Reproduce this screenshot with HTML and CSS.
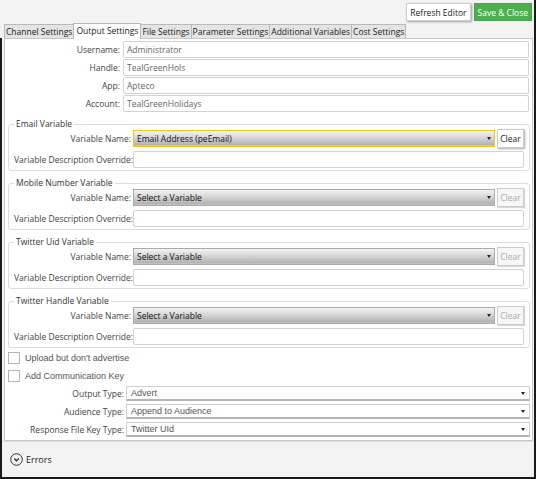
FILE: index.html
```html
<!DOCTYPE html>
<html lang="en">
<head>
  <meta charset="UTF-8" />
  <title>Output Settings</title>
  <link rel="stylesheet" href="styles.css">
</head>
<body>
  <div class="window">
    <div class="toolbar">
      <button class="btn btn-refresh">Refresh Editor</button>
      <button class="btn btn-save">Save &amp; Close</button>
    </div>

    <div class="tabs">
      <div class="tab">Channel Settings</div>
      <div class="tab active">Output Settings</div>
      <div class="tab">File Settings</div>
      <div class="tab">Parameter Settings</div>
      <div class="tab">Additional Variables</div>
      <div class="tab">Cost Settings</div>
    </div>

    <div class="main">
      <div class="panel">
        <div class="account-rows">
          <label>Username:</label><input class="text" value="Administrator" />
          <label>Handle:</label><input class="text" value="TealGreenHols" />
          <label>App:</label><input class="text" value="Apteco" />
          <label>Account:</label><input class="text" value="TealGreenHolidays" />
        </div>

        <fieldset class="group">
          <legend>Email Variable</legend>
          <div class="var-rows">
            <label>Variable Name:</label>
            <div class="combo focused"><span>Email Address (peEmail)</span><i class="arrow"></i></div>
            <button class="clear">Clear</button>
            <label>Variable Description Override:</label>
            <input class="text wide" />
          </div>
        </fieldset>

        <fieldset class="group">
          <legend>Mobile Number Variable</legend>
          <div class="var-rows">
            <label>Variable Name:</label>
            <div class="combo"><span>Select a Variable</span><i class="arrow"></i></div>
            <button class="clear" disabled>Clear</button>
            <label>Variable Description Override:</label>
            <input class="text wide" />
          </div>
        </fieldset>

        <fieldset class="group">
          <legend>Twitter Uid Variable</legend>
          <div class="var-rows">
            <label>Variable Name:</label>
            <div class="combo"><span>Select a Variable</span><i class="arrow"></i></div>
            <button class="clear" disabled>Clear</button>
            <label>Variable Description Override:</label>
            <input class="text wide" />
          </div>
        </fieldset>

        <fieldset class="group">
          <legend>Twitter Handle Variable</legend>
          <div class="var-rows">
            <label>Variable Name:</label>
            <div class="combo"><span>Select a Variable</span><i class="arrow"></i></div>
            <button class="clear" disabled>Clear</button>
            <label>Variable Description Override:</label>
            <input class="text wide" />
          </div>
        </fieldset>

        <div class="checks">
          <label class="check"><span class="box"></span>Upload but don't advertise</label>
          <label class="check"><span class="box"></span>Add Communication Key</label>
        </div>

        <div class="output-rows">
          <label>Output Type:</label>
          <div class="dropdown"><span>Advert</span><i class="arrow"></i></div>
          <label>Audience Type:</label>
          <div class="dropdown"><span>Append to Audience</span><i class="arrow"></i></div>
          <label>Response File Key Type:</label>
          <div class="dropdown"><span>Twitter UId</span><i class="arrow"></i></div>
        </div>
      </div>

      <div class="errors">
        <svg class="errors-icon" width="13" height="13" viewBox="0 0 13 13">
          <circle cx="6.5" cy="6.5" r="5.8" fill="none" stroke="#333" stroke-width="1" />
          <path d="M4.2 5.5 L6.5 7.8 L8.8 5.5" fill="none" stroke="#333" stroke-width="1.3" />
        </svg>
        <span>Errors</span>
      </div>
    </div>
  </div>
</body>
</html>
```

FILE: styles.css
```css
body {
  margin: 0;
  font-family: "Open Sans", "Noto Sans", sans-serif;
  font-size: 8.5px;
  color: #333;
  background-color: #f3f3f3;
}

.window {
  width: 536px;
  height: 479px;
  box-sizing: border-box;
  border-right: 2px solid #1a1a1a;
  border-bottom: 2px solid #1a1a1a;
  display: flex;
  flex-direction: column;
  background-color: #f3f3f3;
}

.toolbar {
  height: 24px;
  box-sizing: border-box;
  display: flex;
  justify-content: flex-end;
  gap: 3px;
  padding: 3px 2px 0 0;
}

.btn {
  font-family: inherit;
  font-size: 8.5px;
  height: 18px;
  padding: 0 3px;
  border-radius: 0;
  cursor: pointer;
}

.btn-refresh {
  background-color: white;
  color: #222;
  border: 1px solid #ccc;
  box-shadow: 1px 1px 2px rgba(0, 0, 0, 0.35);
}

.btn-save {
  background-color: #4cae4f;
  color: white;
  border: 1px solid #46a449;
}

.tabs {
  display: flex;
  height: 14px;
  padding-left: 4px;
  align-items: flex-end;
}

.tab {
  height: 14px;
  box-sizing: border-box;
  padding: 0 1px;
  line-height: 13px;
  background-color: #e4e4e4;
  border: 1px solid #b9b9b9;
  border-bottom: none;
  margin-right: -1px;
  color: #222;
  white-space: nowrap;
}

.tab.active {
  background-color: white;
  height: 16px;
  margin-bottom: -1px;
  position: relative;
  z-index: 1;
  padding: 0 2px;
}

.main {
  flex: 1;
  display: flex;
  flex-direction: column;
  border-left: 2px solid #1a1a1a;
}

.panel {
  background-color: white;
  border: 1px solid #c8c8c8;
  margin-left: 2px;
  margin-right: 1px;
  height: 403px;
  box-sizing: border-box;
  padding: 2px 2px 0 3px;
}

label {
  color: #444;
  white-space: nowrap;
}

.text {
  font-family: inherit;
  font-size: 8.5px;
  color: #666;
  height: 17px;
  box-sizing: border-box;
  border: 1px solid #d2d2d2;
  border-radius: 2px;
  padding: 0 3px;
  outline: none;
  width: 100%;
}

.account-rows {
  display: grid;
  grid-template-columns: 112px 1fr;
  column-gap: 3px;
  row-gap: 1px;
  align-items: center;
  padding-right: 1px;
}

.account-rows label,
.var-rows label,
.output-rows label {
  text-align: right;
}

.group {
  border: 1px solid #dcdcdc;
  border-radius: 3px;
  margin: 7px 0 0 0;
  padding: 0 5px 2px 5px;
}

.group + .group {
  margin-top: 7px;
}

.group legend {
  padding: 0 2px;
  line-height: 10px;
  color: #333;
}

.var-rows {
  display: grid;
  grid-template-columns: 117px 1fr 27px;
  column-gap: 2px;
  row-gap: 3px;
  align-items: center;
}

.combo {
  height: 17px;
  box-sizing: border-box;
  border: 1px solid #aaa;
  background: linear-gradient(#f4f4f4, #d6d6d6 45%, #b4b4b4 90%, #c8c8c8);
  display: flex;
  align-items: center;
  padding: 0 3px;
  color: #111;
}

.combo.focused {
  border-color: #f5c518;
}

.combo span {
  flex: 1;
}

.arrow {
  width: 0;
  height: 0;
  border-left: 2.5px solid transparent;
  border-right: 2.5px solid transparent;
  border-top: 3px solid #222;
}

.clear {
  font-family: inherit;
  font-size: 8.5px;
  height: 19px;
  padding: 0;
  color: #222;
  background-color: white;
  border: 1px solid #ccc;
  box-shadow: 1px 1px 2px rgba(0, 0, 0, 0.35);
}

.clear:disabled {
  color: #aaa;
  background-color: #f7f7f7;
  box-shadow: 1px 1px 1px rgba(0, 0, 0, 0.15);
}

.var-rows .wide {
  grid-column: 2 / 4;
}

.checks {
  display: flex;
  flex-direction: column;
  gap: 6px;
  margin-top: 4px;
}

.check {
  display: flex;
  align-items: center;
  gap: 5px;
  font-family: "Liberation Sans", Arial, sans-serif;
  font-size: 9px;
  color: #555;
}

.box {
  width: 12px;
  height: 12px;
  box-sizing: border-box;
  border: 1px solid #b4b4b4;
  background-color: white;
}

.output-rows {
  display: grid;
  grid-template-columns: 116px 1fr;
  column-gap: 2px;
  row-gap: 3px;
  align-items: center;
  margin-top: 4px;
}

.dropdown {
  height: 15px;
  box-sizing: border-box;
  border: 1px solid #cfcfcf;
  border-bottom: 2px solid #b5b5b5;
  display: flex;
  align-items: center;
  padding: 0 4px;
  color: #555;
  font-family: "Liberation Sans", Arial, sans-serif;
  font-size: 9px;
}

.dropdown span {
  flex: 1;
}

.errors {
  flex: 1;
  display: flex;
  align-items: center;
  gap: 3px;
  padding-left: 8px;
  font-size: 9px;
  color: #222;
  border-top: 1px solid #e0e0e0;
}
```
